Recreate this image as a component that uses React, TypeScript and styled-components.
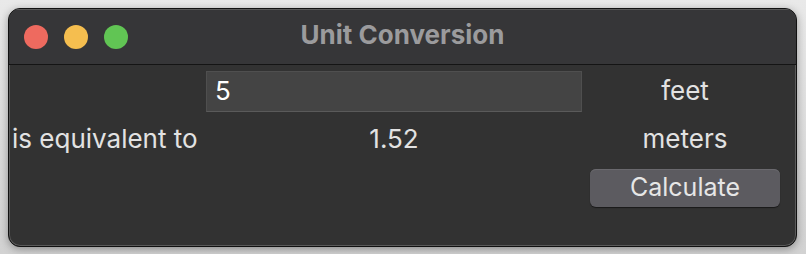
import React, { useState } from 'react'
import styled, { createGlobalStyle } from 'styled-components'

const GlobalStyle = createGlobalStyle`
  html, body {
    margin: 0;
    padding: 0;
    background: linear-gradient(180deg, #e9e9e9 0%, #d2d2d2 100%);
    font-family: Inter, "Liberation Sans", sans-serif;
  }
  * { box-sizing: border-box; }
`

const Page = styled.div`
  width: 806px;
  height: 254px;
  padding: 8px 9px 7px 8px;
`

const Window = styled.div`
  width: 789px;
  height: 239px;
  background: #323232;
  border: 1px solid #111;
  border-radius: 12px;
  box-shadow: inset 0 0 0 1px #5a5a5a, 0 2px 8px rgba(0, 0, 0, 0.35);
  overflow: hidden;
  display: flex;
  flex-direction: column;
`

const TitleBar = styled.div`
  height: 56px;
  flex: none;
  background: #363638;
  border-bottom: 1px solid #141414;
  box-shadow: inset 0 1px 0 #5a5a5a;
  display: flex;
  align-items: center;
  position: relative;
  padding-left: 15px;
  gap: 16px;
`

const Light = styled.span<{ $color: string }>`
  width: 24px;
  height: 24px;
  border-radius: 50%;
  background: ${p => p.$color};
`

const Title = styled.div`
  position: absolute;
  left: 0;
  right: 0;
  top: 11px;
  text-align: center;
  font-size: 26px;
  line-height: 30px;
  font-weight: 700;
  color: #9b9b9d;
  pointer-events: none;
`

const Content = styled.div`
  display: grid;
  grid-template-columns: 186px 376px 190px;
  grid-auto-rows: 41px;
  column-gap: 8px;
  row-gap: 7px;
  padding: 6px 0 0 3px;
  align-items: center;
`

const Label = styled.div<{ $align?: string }>`
  color: #e2e2e2;
  font-size: 26px;
  line-height: 30px;
  margin-top: -2px;
  text-align: ${p => p.$align || 'center'};
  white-space: nowrap;
`

const Field = styled.input`
  width: 100%;
  height: 41px;
  background: #444444;
  border: 1px solid #4f4f4f;
  border-bottom-color: #5a5a5a;
  outline: none;
  color: #ffffff;
  font-family: inherit;
  font-size: 26px;
  padding: 0 0 2px 8px;
`

const Button = styled.button`
  grid-column: 3;
  height: 38px;
  background: #5c5b60;
  border: none;
  border-radius: 6px;
  box-shadow: 0 1px 1px rgba(0, 0, 0, 0.5), inset 0 1px 0 #6a696e;
  color: #e6e6e6;
  font-family: inherit;
  font-size: 25px;
  padding: 0 0 2px;
`

export default function App() {
  const [feet, setFeet] = useState('5')
  const [meters, setMeters] = useState('1.52')

  const calc = () => {
    const v = parseFloat(feet)
    setMeters(isNaN(v) ? '' : (v * 0.3048).toFixed(2))
  }

  return (
    <>
      <GlobalStyle />
      <Page>
        <Window>
          <TitleBar>
            <Light $color="#ee6a5f" />
            <Light $color="#f5be4f" />
            <Light $color="#61c554" />
            <Title>Unit Conversion</Title>
          </TitleBar>
          <Content>
            <span />
            <Field value={feet} onChange={e => setFeet(e.target.value)} />
            <Label>feet</Label>
            <Label $align="left">is equivalent to</Label>
            <Label>{meters}</Label>
            <Label>meters</Label>
            <Button onClick={calc}>Calculate</Button>
          </Content>
        </Window>
      </Page>
    </>
  )
}
